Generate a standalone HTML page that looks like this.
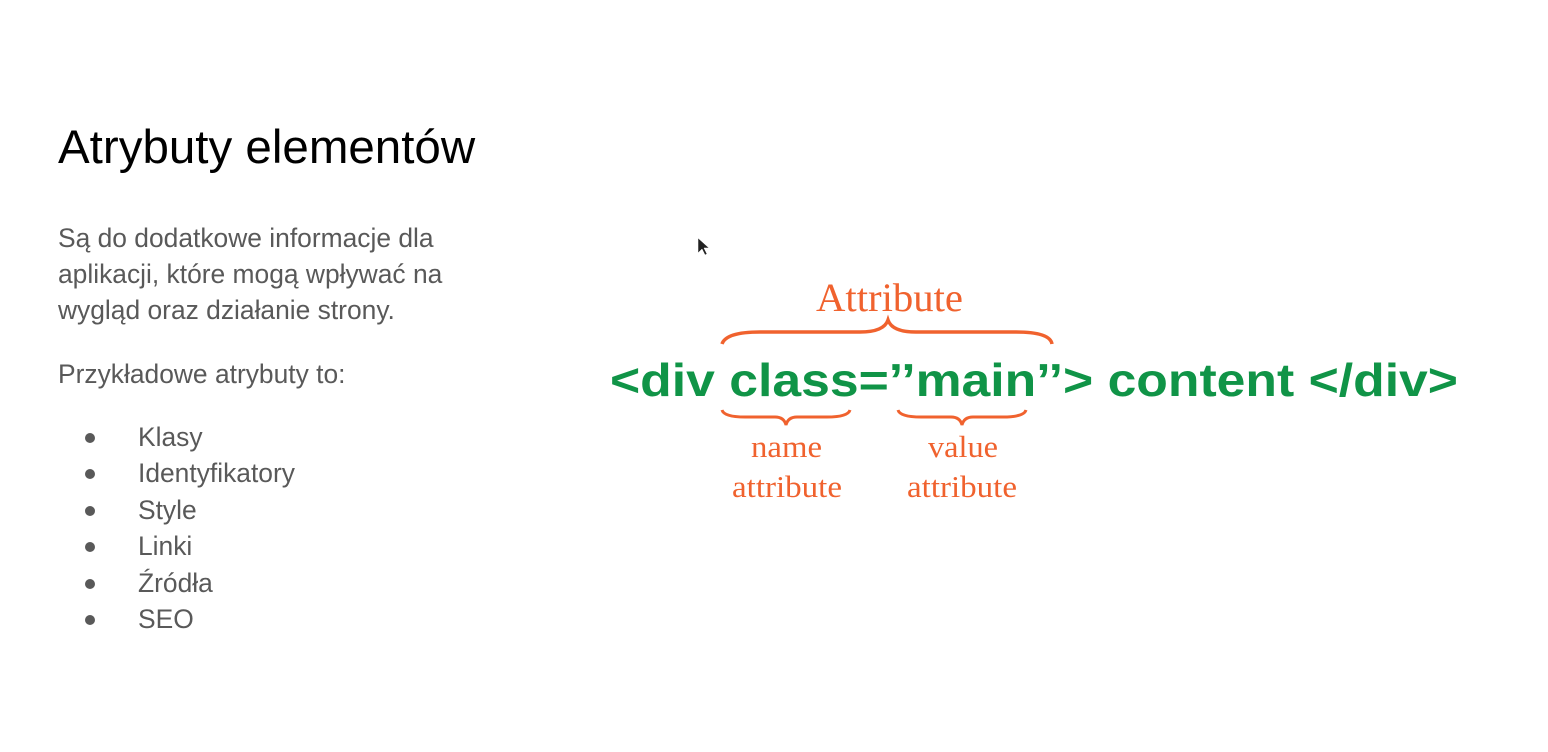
<!DOCTYPE html>
<html><head><meta charset="utf-8"><style>
html,body{margin:0;padding:0;background:#fff;width:1548px;height:752px;overflow:hidden;font-family:"Liberation Sans",Arial,sans-serif}
.t{position:absolute;white-space:nowrap}
h1{position:absolute;left:58px;top:119px;margin:0;font-weight:normal;font-size:47.5px;color:#000;line-height:58px}
.p{color:#595959;font-size:26.4px;line-height:36px;left:58px}
.li{position:absolute;left:138px;color:#595959;font-size:26.4px;line-height:36px}
.dot{position:absolute;left:85px;width:10px;height:10px;border-radius:50%;background:#595959}
</style></head><body>
<h1>Atrybuty elementów</h1>
<div class="t p" style="top:220px">Są do dodatkowe informacje dla<br>aplikacji, które mogą wpływać na<br>wygląd oraz działanie strony.</div>
<div class="t p" style="top:356px">Przykładowe atrybuty to:</div>
<div class="dot" style="top:433px"></div><div class="li" style="top:419px">Klasy</div>
<div class="dot" style="top:469px"></div><div class="li" style="top:455px">Identyfikatory</div>
<div class="dot" style="top:506px"></div><div class="li" style="top:492px">Style</div>
<div class="dot" style="top:542px"></div><div class="li" style="top:528px">Linki</div>
<div class="dot" style="top:579px"></div><div class="li" style="top:565px">Źródła</div>
<div class="dot" style="top:615px"></div><div class="li" style="top:601px">SEO</div>
<svg width="1548" height="752" style="position:absolute;left:0;top:0">
<path d="M698 238 L698 253 L702 249 L705 255 L707 254 L704 248 L709 248 Z" fill="#222" stroke="#fff" stroke-width="0.5"/>
<text x="816" y="311" font-family="Liberation Serif,serif" font-size="40" fill="#f0622e" textLength="147" lengthAdjust="spacingAndGlyphs">Attribute</text>
<path d="M722 344 Q726 332 760 332 L860 332 Q884 332 888 320 Q892 332 916 332 L1016 332 Q1050 332 1052 344" fill="none" stroke="#f0622e" stroke-width="3.5"/>
<text x="610" y="396" font-family="Liberation Sans,Arial,sans-serif" font-weight="bold" font-size="46" fill="#109447" textLength="848" lengthAdjust="spacingAndGlyphs">&lt;div class=’’main’’&gt; content &lt;/div&gt;</text>
<path d="M722 410 Q724 417 745 417 L775 417 Q784 417 786 425 Q788 417 797 417 L827 417 Q848 417 850 410" fill="none" stroke="#f0622e" stroke-width="3"/>
<path d="M898 410 Q900 417 921 417 L951 417 Q960 417 962 425 Q964 417 973 417 L1003 417 Q1024 417 1026 410" fill="none" stroke="#f0622e" stroke-width="3"/>
<g font-family="Liberation Serif,serif" font-size="31" fill="#f0622e" lengthAdjust="spacingAndGlyphs">
<text x="751" y="457" textLength="71" lengthAdjust="spacingAndGlyphs">name</text><text x="732" y="497" textLength="110" lengthAdjust="spacingAndGlyphs">attribute</text>
<text x="928" y="457" textLength="70" lengthAdjust="spacingAndGlyphs">value</text><text x="907" y="497" textLength="110" lengthAdjust="spacingAndGlyphs">attribute</text>
</g>
</svg>
</body></html>
